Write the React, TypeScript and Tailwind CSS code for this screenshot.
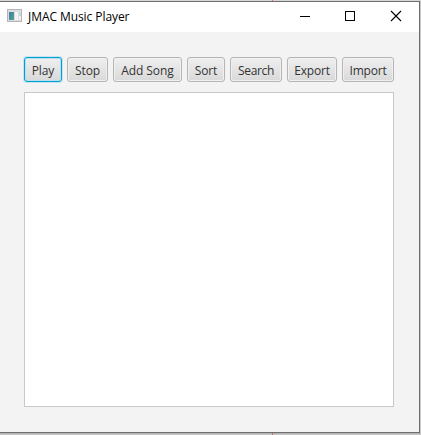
import React from "react";

const buttons = [
  { label: "Play", width: "w-[38px]", focused: true, tracking: "tracking-[-0.1px]" },
  { label: "Stop", width: "w-[41px]", tracking: "tracking-[-0.1px]" },
  { label: "Add Song", width: "w-[69px]", tracking: "tracking-[-0.1px]" },
  { label: "Sort", width: "w-[38px]", tracking: "tracking-[-0.1px]" },
  { label: "Search", width: "w-[52px]", tracking: "tracking-[-0.35px]" },
  { label: "Export", width: "w-[50px]", tracking: "tracking-[-0.2px]" },
  { label: "Import", width: "w-[52px]", tracking: "tracking-[-0.2px]" },
];

function AppIcon() {
  return (
    <svg className="mb-[3px]" width="15" height="13" viewBox="0 0 15 13" shapeRendering="crispEdges">
      <defs>
        <linearGradient id="pane" x1="0" y1="0" x2="1" y2="1">
          <stop offset="0" stopColor="#4779a5" />
          <stop offset="1" stopColor="#4fa588" />
        </linearGradient>
      </defs>
      <rect width="15" height="13" fill="#b3b4b7" />
      <rect x="1" y="1" width="13" height="11" fill="#dcdde1" />
      <rect x="2" y="3" width="5" height="8" fill="url(#pane)" />
      <rect x="8" y="3" width="3" height="8" fill="#f3f3f5" />
      <rect x="12" y="3" width="2" height="4" fill="#c5dcd4" />
      <rect x="12" y="7" width="2" height="4" fill="#f3f3f3" />
    </svg>
  );
}

function WindowControls() {
  return (
    <svg className="mb-[2px]" width="102" height="12" viewBox="0 0 102 12" fill="none" stroke="#000" shapeRendering="crispEdges">
      <path d="M0 6.5H10" />
      <rect x="45.5" y="1.5" width="9" height="9" />
      <path d="M91 1L101 11M101 1L91 11" shapeRendering="auto" strokeWidth="1.1" />
    </svg>
  );
}

export default function App() {
  return (
    <div className="flex h-[435px] w-[421px] flex-col overflow-hidden bg-[#c8c8c8] font-['Open_Sans','Noto_Sans',sans-serif] text-[12px]">
      <div className="h-px shrink-0 bg-[#d7d7d7] pl-[272px]">
        <div className="h-px w-px bg-[#e07078]" />
      </div>
      <div className="flex h-[432px] w-[420px] shrink-0 flex-col border-y border-r border-[#6e6e6e] bg-[#f3f3f3]">
        <header className="flex h-[30px] shrink-0 items-center bg-white pl-[7px]">
          <AppIcon />
          <h1 className="ml-[6px] w-[272px] whitespace-nowrap leading-[16px] tracking-[-0.07px] text-black">
            JMAC Music Player
          </h1>
          <WindowControls />
        </header>
        <main className="flex flex-col pt-[25px] pl-[24px]">
          <div className="flex gap-[5px]">
            {buttons.map((b) => (
              <button
                key={b.label}
                className={`flex h-[25px] items-center justify-center whitespace-nowrap rounded-[3px] border bg-linear-to-b from-[#efefef] to-[#d9d9d9] pt-[2px] leading-[16px] text-[#333] ${b.width} ${b.tracking} ${
                  b.focused
                    ? "border-[#039ed3] shadow-[0_0_0_1px_#c4e6f2,inset_0_0_0_1px_#b5dfed]"
                    : "border-[#b5b5b5] shadow-[inset_0_0_0_1px_#f0f0f0]"
                }`}
              >
                {b.label}
              </button>
            ))}
          </div>
          <div className="mt-[10px] h-[315px] w-[370px] border border-[#c8c8c8] bg-white" />
        </main>
      </div>
      <div className="h-[2px] shrink-0 bg-linear-to-b from-[#b2b2b2] to-[#c8c8c8] pl-[272px]">
        <div className="h-[2px] w-px bg-[#cf6870]" />
      </div>
    </div>
  );
}
